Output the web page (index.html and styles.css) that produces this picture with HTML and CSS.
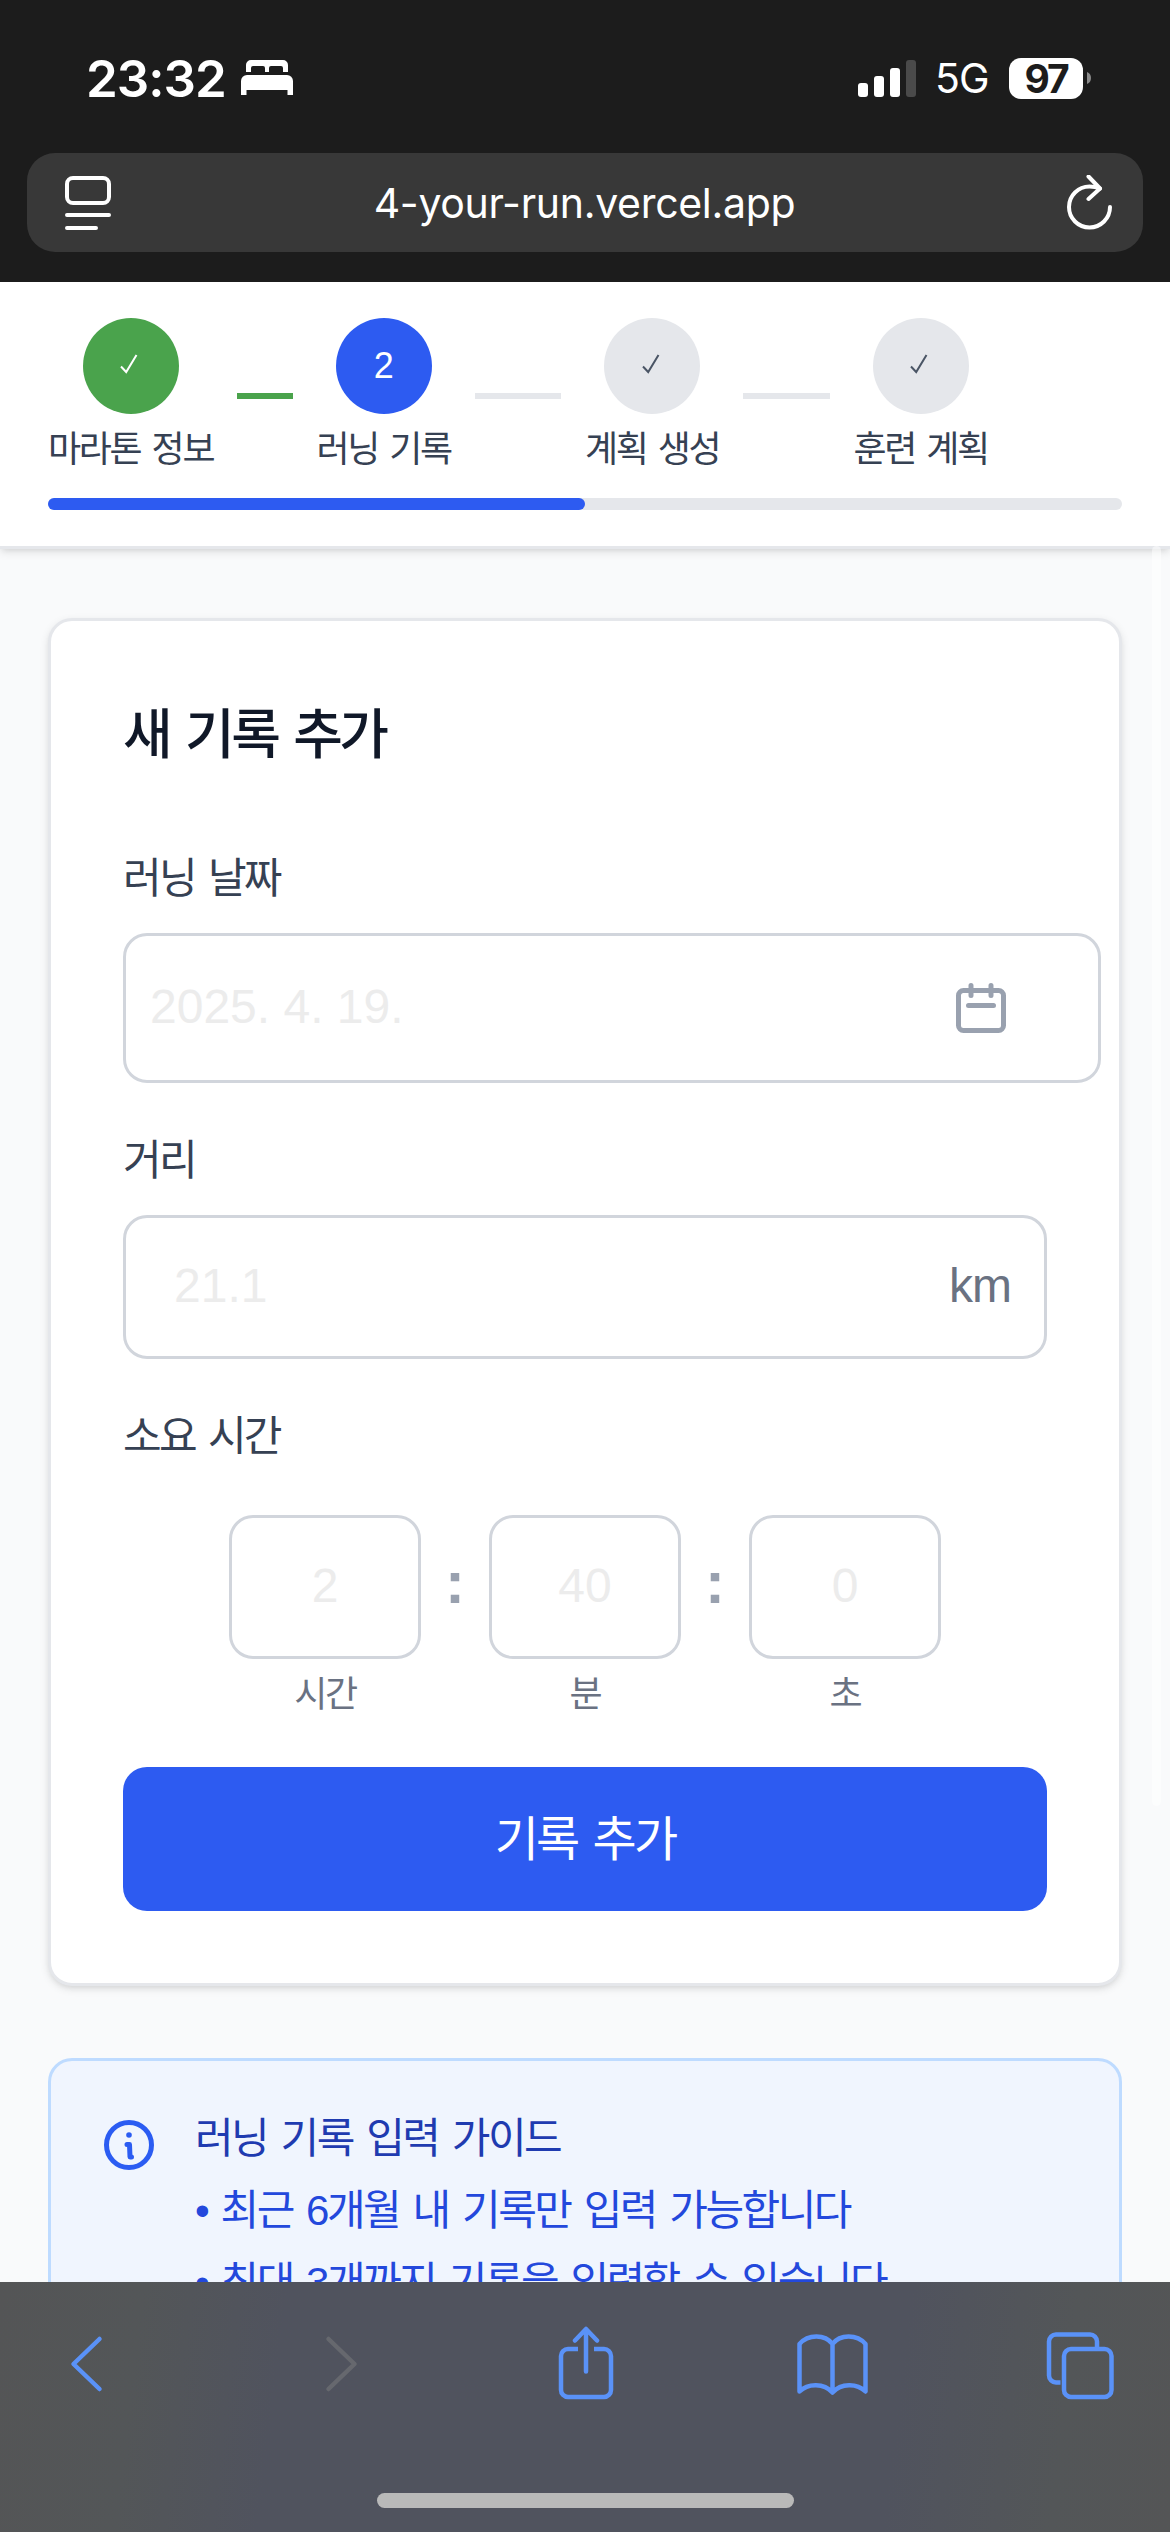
FILE: index.html
```html
<!DOCTYPE html>
<html lang="ko">
<head>
  <meta charset="UTF-8">
  <meta name="viewport" content="width=device-width, initial-scale=1.0">
  <title>4-your-run</title>
  <link rel="stylesheet" href="styles.css">
</head>
<body>
  <div class="browser-top">
    <div class="status-bar">
      <div class="status-left">
        <span class="time">23:32</span>
        <svg class="bed" width="52" height="36" viewBox="0 0 52 36" fill="#fff">
          <path d="M5 12V5a5 5 0 0 1 5-5h32a5 5 0 0 1 5 5v7h-5V8q0-2-2-2H30q-2 0-2 2v4h-4V8q0-2-2-2H12q-2 0-2 2v4z"/>
          <path d="M0 35V21a6 6 0 0 1 6-6h40a6 6 0 0 1 6 6v14h-5.500v-5h-41v5z"/>
        </svg>
      </div>
      <div class="status-right">
        <svg class="signal" width="58" height="37" viewBox="0 0 58 37" fill="#fff">
          <rect x="0" y="23" width="10" height="14" rx="3"/>
          <rect x="16" y="16" width="10" height="21" rx="3"/>
          <rect x="32" y="8" width="10" height="29" rx="3"/>
          <rect x="48" y="0" width="10" height="37" rx="3" fill="#4a4a4a"/>
        </svg>
        <span class="network">5G</span>
        <span class="battery">97</span>
        <svg width="4" height="12" viewBox="0 0 4 12"><path d="M0 0a6.500 6.500 0 0 1 0 12z" fill="#8a8a8a"/></svg>
      </div>
    </div>
    <div class="url-bar">
      <svg width="46" height="54" viewBox="0 0 46 54" fill="none" stroke="#fff" stroke-width="4" stroke-linecap="round">
        <rect x="2" y="2" width="42" height="25" rx="6"/>
        <path d="M2 39h42M2 52h29"/>
      </svg>
      <span class="url">4-your-run.vercel.app</span>
      <svg width="46" height="56" viewBox="0 0 46 56" fill="none" stroke="#fff" stroke-width="4" stroke-linecap="round" stroke-linejoin="round">
        <path d="M43 32A20.500 20.500 0 1 1 22.500 11.500Q28 11.500 33 13.500"/>
        <path d="M21.500 1.500 33 13.500 21.500 24"/>
      </svg>
    </div>
  </div>

  <div class="page">
    <header class="header">
      <div class="steps">
        <div class="step">
          <div class="step-item">
            <div class="circle done"><svg width="18" height="20" viewBox="0 0 18 20"><path d="M1 12.500 6.200 18 16.500 1"/></svg></div>
            <span class="step-label">마라톤 정보</span>
          </div>
          <div class="line done"></div>
        </div>
        <div class="step">
          <div class="step-item">
            <div class="circle current">2</div>
            <span class="step-label">러닝 기록</span>
          </div>
          <div class="line"></div>
        </div>
        <div class="step">
          <div class="step-item">
            <div class="circle"><svg width="18" height="20" viewBox="0 0 18 20"><path d="M1 12.500 6.200 18 16.500 1"/></svg></div>
            <span class="step-label">계획 생성</span>
          </div>
          <div class="line"></div>
        </div>
        <div class="step">
          <div class="step-item">
            <div class="circle"><svg width="18" height="20" viewBox="0 0 18 20"><path d="M1 12.500 6.200 18 16.500 1"/></svg></div>
            <span class="step-label">훈련 계획</span>
          </div>
        </div>
      </div>
      <div class="progress"><div class="progress-fill" style="width: 50%"></div></div>
    </header>

    <main class="content">
      <section class="card">
        <h2>새 기록 추가</h2>

        <div class="label">러닝 날짜</div>
        <div class="field date-field">
          <span class="placeholder">2025. 4. 19.</span>
          <svg width="60" height="60" viewBox="0 0 60 60" fill="none" stroke="#99a1af" stroke-width="5" stroke-linecap="round">
            <rect x="7.500" y="12.500" width="45" height="40" rx="5"/>
            <path d="M20 7.500v10M40 7.500v10M17.500 27.500h25"/>
          </svg>
        </div>

        <div class="label">거리</div>
        <div class="field distance-field">
          <span class="placeholder">21.1</span>
          <span class="unit">km</span>
        </div>

        <div class="label time-title">소요 시간</div>
        <div class="time-row">
          <div class="time-col">
            <div class="field time-field">2</div>
            <span class="time-label">시간</span>
          </div>
          <span class="colon">:</span>
          <div class="time-col">
            <div class="field time-field">40</div>
            <span class="time-label">분</span>
          </div>
          <span class="colon">:</span>
          <div class="time-col">
            <div class="field time-field">0</div>
            <span class="time-label">초</span>
          </div>
        </div>

        <button class="submit-btn">기록 추가</button>
      </section>

      <section class="guide">
        <svg class="info-icon" width="60" height="60" viewBox="0 0 60 60" fill="none" stroke="#2b5cf2" stroke-width="5">
          <circle cx="30" cy="30" r="22.500"/>
          <path d="M28 29.500h2.500l.5 12.500h1.500" stroke-linecap="round" stroke-linejoin="round"/>
          <circle cx="30" cy="20" r="2.800" fill="#2b5cf2" stroke="none"/>
        </svg>
        <div class="guide-text">
          <div class="guide-title">러닝 기록 입력 가이드</div>
          <div class="guide-item">• 최근 6개월 내 기록만 입력 가능합니다</div>
          <div class="guide-item">• 최대 3개까지 기록을 입력할 수 있습니다</div>
        </div>
      </section>
    </main>
    <div class="scroll-thumb"></div>
  </div>

  <div class="toolbar">
    <div class="toolbar-icons">
      <svg width="72" height="76" viewBox="0 0 72 76"><path d="M47.500 13 21.500 38l26 25"/></svg>
      <svg class="disabled" width="72" height="76" viewBox="0 0 72 76"><path d="M28.500 13l26 25-26 25"/></svg>
      <svg width="72" height="76" viewBox="0 0 72 76">
        <path d="M30 23h-10a7 7 0 0 0-7 7v34a7 7 0 0 0 7 7h36a7 7 0 0 0 7-7V30a7 7 0 0 0-7-7h-10" stroke-linecap="butt"/>
        <path d="M38 45.500V3.500M27 14.500 38 3l11 11.500"/>
      </svg>
      <svg width="72" height="76" viewBox="0 0 72 76">
        <path d="M36.500 18v47M36.500 18C29 8 12 8 3.500 18v47.500C12 57 28 57 36.500 66.500 45 57 61 57 69.500 65.500V18C61 8 44 8 36.500 18"/>
      </svg>
      <svg width="72" height="76" viewBox="0 0 72 76">
        <rect x="20" y="23" width="47.500" height="48" rx="7"/>
        <path d="M20 56.500h-4.500a7 7 0 0 1-7-7V15.500a7 7 0 0 1 7-7h34a7 7 0 0 1 7 7V23" stroke-linecap="butt" transform="translate(-3.500)"/>
      </svg>
    </div>
    <div class="home-indicator"></div>
  </div>
</body>
</html>
```

FILE: styles.css
```css
* {
  box-sizing: border-box;
}
body {
  margin: 0;
  width: 1170px;
  height: 2532px;
  display: flex;
  flex-direction: column;
  overflow: hidden;
  font-family: "Liberation Sans", "Noto Sans CJK KR", sans-serif;
  background-color: #f9fafb;
  color: #364153;
}
svg {
  display: block;
  flex-shrink: 0;
}

/* browser chrome */
.browser-top {
  height: 282px;
  background-color: #1c1c1c;
  color: #fff;
  font-family: Inter, sans-serif;
  padding: 0 27px;
}
.status-bar {
  height: 153px;
  display: flex;
  justify-content: space-between;
  padding: 57px 52px 0 59px;
}
.status-left, .status-right {
  display: flex;
  align-items: center;
  height: 42px;
}
.time {
  font-size: 51px;
  font-weight: 600;
  width: 155px;
  letter-spacing: -1px;
}
.network {
  font-size: 41px;
  width: 74px;
  margin-left: 19px;
  letter-spacing: -1px;
}
.battery {
  width: 74px;
  height: 41px;
  line-height: 41px;
  border-radius: 12px;
  background-color: #fff;
  color: #1c1c1c;
  font-size: 39px;
  font-weight: 700;
  letter-spacing: -2px;
  text-align: center;
  margin-right: 4px;
}
.url-bar {
  height: 99px;
  border-radius: 28px;
  background-color: #383838;
  display: flex;
  align-items: center;
  justify-content: space-between;
  padding: 0 30px 0 38px;
}
.url {
  font-size: 41px;
  letter-spacing: -0.3px;
  margin-right: 9px;
}

/* stepper */
.page {
  flex: 1;
  min-height: 0;
  overflow: hidden;
  position: relative;
}
.header {
  background-color: #fff;
  padding: 36px 48px;
  border-bottom: 3px solid #e5e7eb;
  box-shadow: 0 3px 9px rgba(0, 0, 0, 0.1), 0 3px 6px -3px rgba(0, 0, 0, 0.1);
}
.steps {
  display: flex;
}
.step {
  flex: 1;
  display: flex;
  align-items: center;
}
.step-item {
  display: flex;
  flex-direction: column;
  align-items: center;
}
.circle {
  width: 96px;
  height: 96px;
  border-radius: 50%;
  background-color: #e5e7eb;
  display: flex;
  align-items: center;
  justify-content: center;
  font-size: 36px;
  margin-bottom: 12px;
}
.circle path {
  fill: none;
  stroke: #4a5565;
  stroke-width: 2;
}
.circle svg {
  margin: 0 3px 4px 0;
}
.circle.done {
  background-color: #4aa34c;
}
.circle.done path {
  stroke: #fff;
}
.circle.current {
  background-color: #2d5bf1;
  color: #fff;
}
.step-label {
  font-size: 36px;
  line-height: 48px;
  letter-spacing: -0.065em;
  word-spacing: 0.1em;
  white-space: nowrap;
}
.line {
  flex: 1;
  height: 6px;
  margin: 0 24px;
  background-color: #e5e7eb;
}
.line.done {
  background-color: #4aa34c;
}
.progress {
  height: 12px;
  margin-top: 24px;
  border-radius: 6px;
  background-color: #e5e7eb;
}
.progress-fill {
  height: 12px;
  border-radius: 6px;
  background-color: #2d5bf1;
}

/* record form */
.content {
  padding: 69px 48px 0;
}
.card {
  background-color: #fff;
  border: 3px solid #e5e7eb;
  border-radius: 24px;
  padding: 72px;
  box-shadow: 0 3px 9px rgba(0, 0, 0, 0.1), 0 3px 6px -3px rgba(0, 0, 0, 0.1);
}
h2 {
  margin: 0 0 72px;
  font-size: 54px;
  font-weight: 500;
  line-height: 84px;
  letter-spacing: -0.065em;
  word-spacing: 0.08em;
  color: #101828;
}
.label {
  font-size: 42px;
  line-height: 60px;
  letter-spacing: -0.065em;
  word-spacing: 0.1em;
  margin-bottom: 24px;
}
.field {
  height: 144px;
  border: 3px solid #d1d5dc;
  border-radius: 24px;
  display: flex;
  align-items: center;
  justify-content: space-between;
  font-size: 48px;
  color: #ececec;
  margin-bottom: 48px;
}
.placeholder, .unit {
  padding-bottom: 3px;
}
.date-field {
  width: 978px;
  height: 150px;
  padding: 0 87px 0 24px;
}
.distance-field {
  padding: 0 33px 0 48px;
}
.unit {
  color: #6a7282;
  letter-spacing: -1px;
}
.time-title {
  margin-bottom: 48px;
}
.time-row {
  display: flex;
  justify-content: center;
  gap: 24px;
  margin-bottom: 48px;
}
.time-col {
  display: flex;
  flex-direction: column;
  align-items: center;
}
.time-field {
  width: 192px;
  justify-content: center;
  padding-bottom: 3px;
  margin-bottom: 12px;
}
.time-label {
  font-size: 36px;
  line-height: 48px;
  letter-spacing: -0.065em;
  color: #6a7282;
}
.colon {
  font-size: 60px;
  font-weight: 700;
  line-height: 136px;
  color: #99a1af;
}
.submit-btn {
  display: block;
  width: 100%;
  height: 144px;
  border: none;
  border-radius: 24px;
  padding-bottom: 10px;
  background-color: #2d5bf1;
  color: #fff;
  font-family: inherit;
  font-size: 48px;
  letter-spacing: -0.06em;
  word-spacing: 0.1em;
}

/* guide box */
.guide {
  display: flex;
  gap: 36px;
  margin-top: 72px;
  height: 420px;
  padding: 48px;
  border: 3px solid #bedbff;
  border-radius: 24px;
  background-color: #f0f5fe;
}
.info-icon {
  margin-top: 6px;
}
.guide-text {
  font-size: 42px;
  line-height: 60px;
  letter-spacing: -0.06em;
  word-spacing: 0.1em;
  color: #2348dc;
}
.guide-title {
  color: #1f3bb0;
}
.guide-item {
  margin-top: 12px;
}
.scroll-thumb {
  position: absolute;
  top: 264px;
  right: 9px;
  width: 9px;
  height: 1260px;
  border-radius: 5px;
  background-color: rgba(255, 255, 255, 0.5);
}

/* bottom toolbar */
.toolbar {
  height: 250px;
  padding-top: 44px;
  background: linear-gradient(97deg, #545556 0%, #535658 12%, #50535e 24%, #50535e 76%, #535658 90%, #545556 100%);
}
.toolbar-icons {
  display: flex;
  justify-content: space-between;
  padding: 0 54px 0 52px;
}
.toolbar svg {
  fill: none;
  stroke: #5a92f8;
  stroke-width: 4.5;
  stroke-linecap: round;
  stroke-linejoin: round;
}
.toolbar svg.disabled {
  stroke: #66686e;
}
.home-indicator {
  width: 417px;
  height: 15px;
  margin: 91px auto 0;
  border-radius: 8px;
  background-color: #b9b9b9;
}
```
